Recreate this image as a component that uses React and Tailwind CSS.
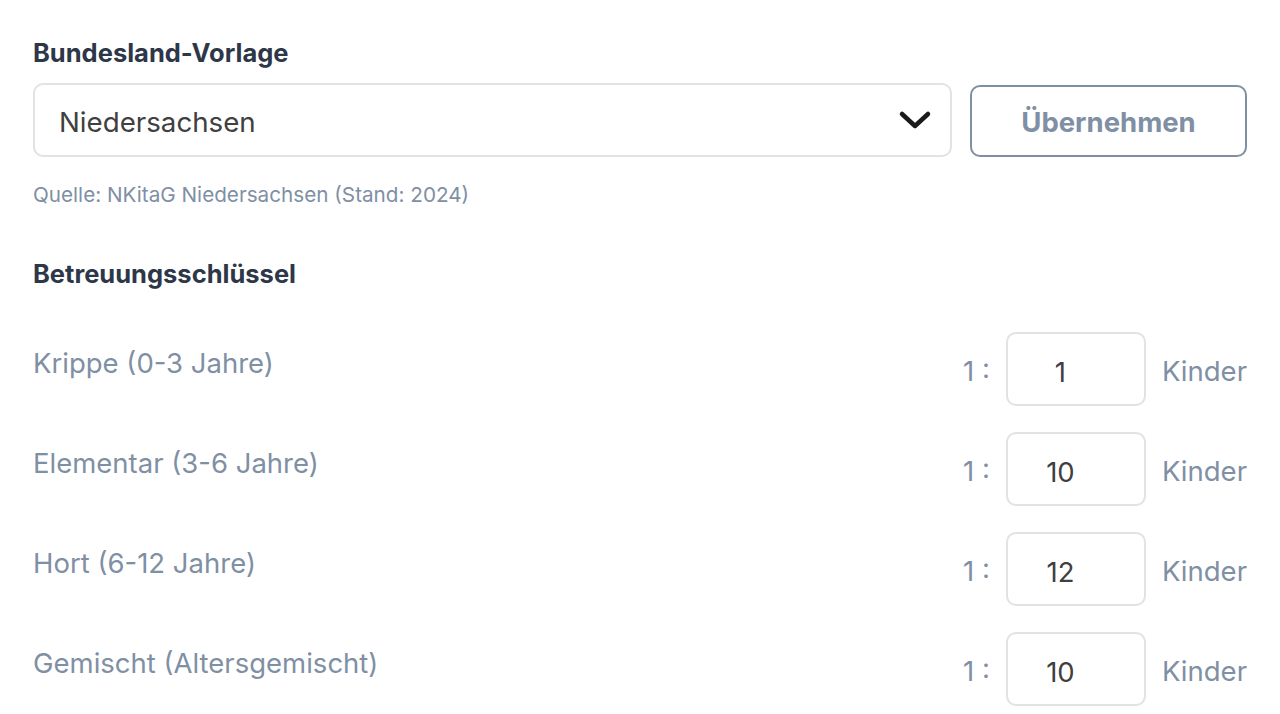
import React, { useState } from "react";

const rows = [
  { label: "Krippe (0-3 Jahre)", value: "1" },
  { label: "Elementar (3-6 Jahre)", value: "10" },
  { label: "Hort (6-12 Jahre)", value: "12" },
  { label: "Gemischt (Altersgemischt)", value: "10" },
];

function Chevron() {
  return (
    <svg width="34" height="20" viewBox="0 0 34 20" fill="none">
      <path d="M4 4 L17 16 L30 4" stroke="#1a1a1a" strokeWidth="4.5" strokeLinecap="round" strokeLinejoin="round" />
    </svg>
  );
}

export default function App() {
  const [state, setState] = useState("Niedersachsen");
  const [values, setValues] = useState(rows.map((r) => r.value));

  return (
    <div className="min-h-screen bg-white px-[33px] pt-[36px]" style={{ fontFamily: "Inter, 'Noto Sans', sans-serif" }}>
      <h2 className="text-[25.5px] leading-[34px] font-bold text-[#2d3748]">Bundesland-Vorlage</h2>

      <div className="mt-[13px] flex items-end gap-[18px]">
        <div className="relative flex-1">
          <select
            value={state}
            onChange={(e) => setState(e.target.value)}
            className="w-full h-[74px] appearance-none rounded-[10px] border-2 border-[#e2e2e2] bg-white pl-[24px] pr-[70px] pt-[6px] text-[27.7px] text-[#404040] outline-none"
          >
            <option>Niedersachsen</option>
            <option>Bayern</option>
            <option>Berlin</option>
          </select>
          <div className="pointer-events-none absolute right-[20px] top-1/2 -translate-y-1/2 flex">
            <Chevron />
          </div>
        </div>
        <button className="w-[277px] h-[72px] rounded-[10px] border-2 border-[#7f8fa4] pt-[4px] text-[27.5px] font-bold text-[#7f8fa4] hover:opacity-90">
          Übernehmen
        </button>
      </div>

      <p className="mt-[24px] text-[20.7px] leading-[28px] text-[#7f8fa4]">Quelle: NKitaG Niedersachsen (Stand: 2024)</p>

      <h2 className="mt-[48px] text-[25.5px] leading-[34px] font-bold text-[#2d3748]">Betreuungsschlüssel</h2>

      <div className="mt-[41px] flex flex-col gap-[26px]">
        {rows.map((r, i) => (
          <div key={r.label} className="flex items-center justify-between">
            <span className="pb-[13px] text-[27.5px] leading-[36px] text-[#7f8fa4]">{r.label}</span>
            <div className="flex items-center gap-[16px]">
              <span className="pt-[6px] text-[27.5px] text-[#7f8fa4]">1 :</span>
              <input
                value={values[i]}
                onChange={(e) => {
                  const v = [...values];
                  v[i] = e.target.value;
                  setValues(v);
                }}
                className="w-[140px] h-[74px] rounded-[10px] border-2 border-[#e2e2e2] pl-[12px] pr-[43px] pt-[6px] text-center text-[27.5px] text-[#404040] outline-none"
              />
              <span className="pt-[6px] text-[27.5px] text-[#7f8fa4]">Kinder</span>
            </div>
          </div>
        ))}
      </div>
    </div>
  );
}
